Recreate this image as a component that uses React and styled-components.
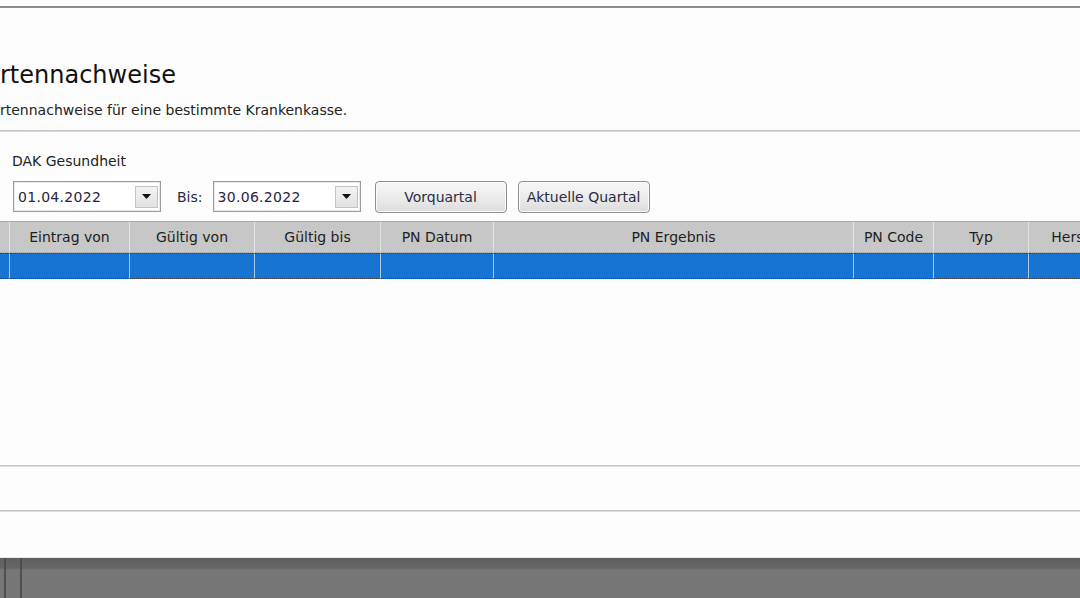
import React from 'react';
import styled, { createGlobalStyle } from 'styled-components';

const GlobalStyle = createGlobalStyle`
  html, body {
    margin: 0;
    padding: 0;
    background: #fdfdfd;
    overflow: hidden;
  }
  body {
    font-family: "DejaVu Sans", "Liberation Sans", sans-serif;
    color: #1e1e1e;
  }
`;

const Window = styled.div`
  width: 1080px;
  height: 598px;
  display: flex;
  flex-direction: column;
  background: #fdfdfd;
  overflow: hidden;
`;

const TopRule = styled.div`
  height: 6px;
  border-bottom: 2px solid #8c8c8c;
  flex-shrink: 0;
`;

const Heading = styled.div`
  box-sizing: border-box;
  padding: 52px 0 0 0;
  height: 122px;
  flex-shrink: 0;
`;

const Title = styled.h1`
  margin: 0;
  font-size: 24px;
  line-height: 30px;
  font-weight: normal;
  color: #111;
  white-space: nowrap;
`;

const Subtitle = styled.p`
  margin: 12px 0 0 0;
  font-size: 14px;
  line-height: 17px;
  color: #222;
  white-space: nowrap;
`;

const Divider = styled.div`
  height: 1px;
  flex-shrink: 0;
  background: #c4c4c4;
  border-bottom: 1px solid #dcdcdc;
`;

const Filter = styled.div`
  box-sizing: border-box;
  padding: 21px 0 0 12px;
  height: 80px;
  flex-shrink: 0;
  display: flex;
  flex-direction: column;
  gap: 11px;
`;

const Label = styled.div`
  font-size: 14px;
  line-height: 17px;
  color: #222;
  white-space: nowrap;
`;

const Controls = styled.div`
  display: flex;
  align-items: center;
  height: 31px;
`;

const Combo = styled.div`
  box-sizing: border-box;
  width: 148px;
  height: 31px;
  border: 1px solid #9c9c9c;
  box-shadow: inset 0 0 0 1px #e9e9e9;
  background: #fff;
  display: flex;
  align-items: center;
  justify-content: space-between;
  padding: 0 2px 0 4px;
  margin-left: 1px;
`;

const ComboText = styled.span`
  font-size: 14px;
  color: #2a2340;
  letter-spacing: 0.3px;
`;

const ArrowButton = styled.div`
  box-sizing: border-box;
  width: 23px;
  height: 22px;
  border: 1px solid #c2c2c2;
  background: linear-gradient(#f3f3f3, #e1e1e1);
  display: flex;
  align-items: center;
  justify-content: center;
`;

const BisLabel = styled.span`
  font-size: 14px;
  color: #2a2a40;
  margin: 0 9px 0 16px;
`;

const Button = styled.button`
  box-sizing: border-box;
  height: 32px;
  width: 132px;
  margin-left: ${p => p.$gap}px;
  border: 1px solid #8e8e8e;
  border-radius: 4px;
  background: linear-gradient(#f7f7f7 0%, #ececec 50%, #dcdcdc 100%);
  box-shadow: inset 0 0 0 1px #fafafa;
  font-family: "DejaVu Sans", "Liberation Sans", sans-serif;
  font-size: 14px;
  color: #2c2c44;
  padding: 0;
  white-space: nowrap;
`;

const TableArea = styled.div`
  margin-top: 9px;
  flex: 1;
  border-top: 1px solid #a8a8a8;
  overflow: hidden;
`;

const Row = styled.div`
  display: grid;
  grid-template-columns: 10px 120px 125px 126px 113px 360px 80px 95px 114px;
  width: 1143px;
  height: ${p => p.$h}px;
  box-sizing: border-box;
`;

const HeaderCell = styled.div`
  background: #c7c7c7;
  border-right: 1px solid #e4e4e4;
  border-bottom: 1px solid #b4b4b4;
  font-size: 14px;
  color: #1e1e1e;
  display: flex;
  align-items: center;
  justify-content: center;
  white-space: nowrap;
  overflow: hidden;
`;

const BodyCell = styled.div`
  background: #1874d3;
  border-right: 1px solid #a9c8ee;
  border-top: 1px dotted #3a3a3a;
  border-bottom: 1px dotted #3a3a3a;
`;

const Footer = styled.div`
  height: ${p => p.$h}px;
  flex-shrink: 0;
`;

const Taskbar = styled.div`
  height: 40px;
  flex-shrink: 0;
  border-top: 1px solid #eaeaea;
  background: linear-gradient(#5f5f5f 0px, #666 10px, #777 12px, #777 100%);
  display: flex;
  gap: 14px;
  padding-left: 4px;
`;

const Notch = styled.div`
  width: 2px;
  height: 100%;
  background: #4e4e4e;
`;

const Arrow = () => (
  <svg width="9" height="5" viewBox="0 0 9 5">
    <path d="M0 0h9L4.5 5z" fill="#111" />
  </svg>
);

const columns = ['', 'Eintrag von', 'Gültig von', 'Gültig bis', 'PN Datum', 'PN Ergebnis', 'PN Code', 'Typ', 'Hersteller'];

function DateCombo({ value }) {
  return (
    <Combo>
      <ComboText>{value}</ComboText>
      <ArrowButton>
        <Arrow />
      </ArrowButton>
    </Combo>
  );
}

export default function App() {
  return (
    <>
      <GlobalStyle />
      <Window>
        <TopRule />
        <Heading>
          <Title>rtennachweise</Title>
          <Subtitle>rtennachweise für eine bestimmte Krankenkasse.</Subtitle>
        </Heading>
        <Divider />
        <Filter>
          <Label>DAK Gesundheit</Label>
          <Controls>
            <DateCombo value="01.04.2022" />
            <BisLabel>Bis:</BisLabel>
            <DateCombo value="30.06.2022" />
            <Button $gap={14}>Vorquartal</Button>
            <Button $gap={11}>Aktuelle Quartal</Button>
          </Controls>
        </Filter>
        <TableArea>
          <Row $h={31}>
            {columns.map((c, i) => (
              <HeaderCell key={i}>{c}</HeaderCell>
            ))}
          </Row>
          <Row $h={26}>
            {columns.map((c, i) => (
              <BodyCell key={i} />
            ))}
          </Row>
        </TableArea>
        <Divider />
        <Footer $h={43} />
        <Divider />
        <Footer $h={45} />
        <Taskbar>
          <Notch />
          <Notch />
        </Taskbar>
      </Window>
    </>
  );
}
